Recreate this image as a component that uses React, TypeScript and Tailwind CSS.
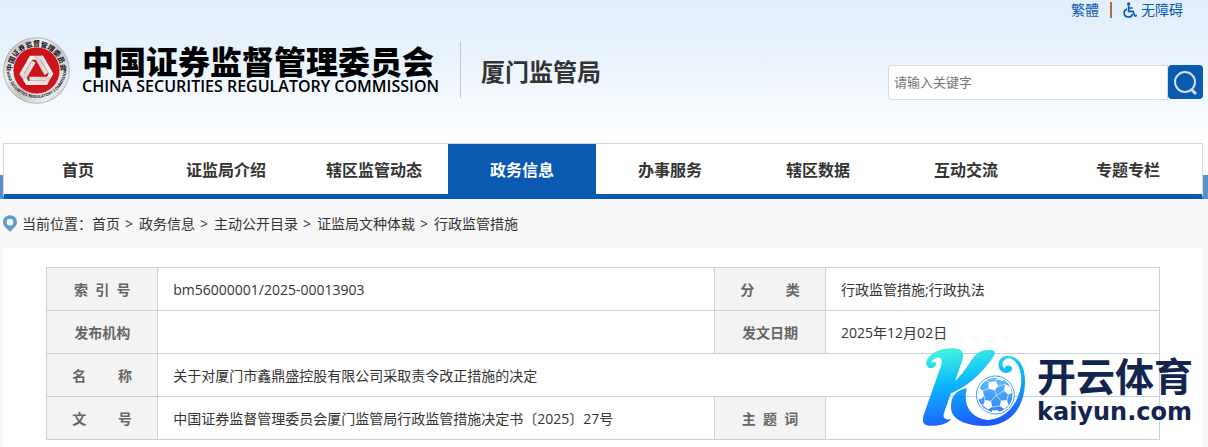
const navItems = ['首页', '证监局介绍', '辖区监管动态', '政务信息', '办事服务', '辖区数据', '互动交流', '专题专栏'];
const crumbs = ['首页', '政务信息', '主动公开目录', '证监局文种体裁', '行政监管措施'];

const th = 'border border-[#c6d1db] bg-[#f3f3f3] pt-[2px] text-center font-bold text-[#666] whitespace-pre';
const td = 'border border-[#c6d1db] px-[15px] pt-[2px] text-left';

function Seal() {
    return (
        <svg viewBox="0 0 200 200" className="w-[67px] h-[67px] shrink-0 overflow-visible" aria-hidden="true">
            <defs>
                <linearGradient id="silver" x1="0" y1="0" x2="1" y2="1">
                    <stop offset="0" stopColor="#999" />
                    <stop offset="0.3" stopColor="#f4f4f4" />
                    <stop offset="0.55" stopColor="#c4c4c4" />
                    <stop offset="0.8" stopColor="#eee" />
                    <stop offset="1" stopColor="#8e8e8e" />
                </linearGradient>
                <linearGradient id="band" x1="0" y1="0" x2="0.6" y2="1">
                    <stop offset="0" stopColor="#fff" />
                    <stop offset="1" stopColor="#c9c9c9" />
                </linearGradient>
                <path id="arcTop" d="M29 118 A73 73 0 1 1 171 118" />
                <path id="arcBottom" d="M10 92 A90 90 0 1 0 190 92" />
            </defs>
            <circle cx="100" cy="100" r="98" fill="url(#silver)" stroke="#999" strokeWidth="2" />
            <circle cx="100" cy="100" r="70" fill="#cd141d" stroke="#eee" strokeWidth="2" />
            <text fontSize="21" fontWeight="700" fill="#111" fontFamily="Noto Sans CJK SC, sans-serif" textAnchor="middle">
                <textPath href="#arcTop" startOffset="50%">中国证券监督管理委员会</textPath>
            </text>
            <text fontSize="12" fontWeight="700" fill="#222" fontFamily="Open Sans, sans-serif" textAnchor="middle">
                <textPath href="#arcBottom" startOffset="50%">CHINA SECURITIES REGULATORY COMMISSION</textPath>
            </text>
            <g fill="none" stroke="url(#band)" strokeWidth="12">
                <path d="M99 62 H84 L56 110 L64 122 L92 74" />
                <path d="M99 62 H84 L56 110 L64 122 L92 74" transform="rotate(120 100 103)" />
                <path d="M99 62 H84 L56 110 L64 122 L92 74" transform="rotate(240 100 103)" />
            </g>
        </svg>
    );
}

function KaiyunMark() {
    return (
        <svg viewBox="0 0 360 285" className="w-[120px] h-[95px] mr-[2px] shrink-0" aria-hidden="true">
            <defs>
                <linearGradient id="kBlue" gradientUnits="userSpaceOnUse" x1="150" y1="25" x2="190" y2="258">
                    <stop offset="0" stopColor="#41efe2" />
                    <stop offset="0.4" stopColor="#0bb9fb" />
                    <stop offset="1" stopColor="#2055ff" />
                </linearGradient>
                <linearGradient id="ballBlue" x1="0" y1="0" x2="0" y2="1">
                    <stop offset="0" stopColor="#5cc0f8" />
                    <stop offset="1" stopColor="#3380fb" />
                </linearGradient>
                <clipPath id="ballClip">
                    <circle cx="241" cy="165" r="52" />
                </clipPath>
            </defs>
            <g fill="url(#kBlue)">
                <path d="M52 84 C34 88 28 67 39 54 C58 32 86 24 116 25 C142 26 150 39 141 64 L86 222 C83 234 93 241 109 237 C91 257 64 258 42 257 C24 256 20 244 27 222 L78 77 C86 57 75 47 59 56 C47 63 46 68 57 66 C67 66 66 79 52 84 Z" />
                <path d="M92 166 L111 132 C132 113 151 91 165 67 C183 36 201 29 228 30 C243 32 243 40 232 55 C197 104 157 143 92 166 Z" />
                <path d="M156 144 C143 187 161 234 217 240 C284 239 326 166 318 104 C312 72 296 54 278 55 C260 59 257 82 271 86 C266 75 283 73 291 82 C294 95 277 103 264 97 C243 87 246 52 273 48 C310 44 331 77 330 127 C328 205 286 258 205 258 C143 255 105 235 108 196 C110 167 123 151 156 144 Z" />
            </g>
            <circle cx="241" cy="165" r="57" fill="#fff" stroke="#4c9dfb" strokeWidth="3" />
            <g clipPath="url(#ballClip)">
                <circle cx="241" cy="165" r="52" fill="url(#ballBlue)" />
                <g fill="#fff">
                    <path d="M221 126 L243 124 L250 138 L239 151 L220 146 Z" />
                    <path d="M270 133 L286 140 L291 158 L280 164 L267 152 Z" />
                    <path d="M258 182 L276 180 L281 196 L267 207 L254 198 Z" />
                    <path d="M210 180 L228 183 L232 201 L219 209 L204 196 Z" />
                    <path d="M192 143 L204 152 L207 168 L198 178 L187 174 Z" />
                    <path d="M247 110 L268 118 L262 123 L246 117 Z" />
                    <path d="M232 211 L249 211 L256 218 L230 219 Z" />
                </g>
                <path
                    fill="none"
                    stroke="#fff"
                    strokeWidth="2"
                    d="M221 126 L208 118 M243 124 L248 112 M250 138 L270 133 M239 151 L244 166 L267 152 M244 166 L258 182 M244 166 L228 183 M220 146 L204 152 M207 168 L210 180 M280 164 L276 180 M254 198 L232 201 M267 207 L268 216 M281 196 L290 190 M219 209 L218 216 M204 196 L194 190"
                />
            </g>
        </svg>
    );
}

export default function App() {
    return (
        <div className="min-h-screen flex flex-col bg-[#f7f7f7] text-sm text-[#333] font-['Open_Sans','Noto_Sans_CJK_SC',sans-serif]">
            <header className="pr-[2px] bg-[linear-gradient(to_bottom,#e1eefc_0,#e7f2fd_50px,#fff_140px,#fff_175px,#5b8fca_175px)]">
                <div className="w-full max-w-[1200px] mx-auto">
                    <div className="flex justify-end items-center h-5 pr-5 text-[#0a5ab2]">
                        <a href="#traditional">繁體</a>
                        <span className="w-[2px] h-4 mx-[11px] bg-[#b0703a]" />
                        <a href="#accessible" className="flex items-center gap-1">
                            <svg viewBox="0 0 42 48" className="w-[14px] h-4" fill="none" stroke="#0a5ab2" strokeWidth="5">
                                <circle cx="17" cy="6" r="5" fill="#0a5ab2" stroke="none" />
                                <path d="M17 11 V28 H30 L36 42 L42 40 M18 18 H29" />
                                <path d="M12 21 C0 25 0 44 16 45 C23 45 28 41 29 36" />
                            </svg>
                            无障碍
                        </a>
                    </div>

                    {/* Logo and search */}
                    <div className="flex items-center h-[123px] pb-[23px]">
                        <Seal />
                        <div className="ml-3 w-[358px] whitespace-nowrap text-black">
                            <div className="text-[32px] leading-8 font-black">中国证券监督管理委员会</div>
                            <div className="text-base leading-4 font-semibold">CHINA SECURITIES REGULATORY COMMISSION</div>
                        </div>
                        <div className="h-14 ml-5 border-l border-[#c8c8c8]" />
                        <h1 className="ml-5 mt-1 text-2xl font-bold whitespace-nowrap">厦门监管局</h1>
                        <form className="flex ml-auto mt-6 w-[315px] h-[35px]">
                            <input
                                type="text"
                                aria-label="请输入关键字"
                                placeholder="请输入关键字"
                                className="flex-1 min-w-0 px-[5px] bg-white border border-[#d9d9d9] rounded-l text-[13px] placeholder:text-[#757575]"
                            />
                            <button type="button" aria-label="搜索" className="flex items-center justify-center w-[35px] h-[34px] rounded bg-[#0a5ab2]">
                                <svg viewBox="0 0 26 26" className="w-[26px] h-[26px]" fill="none" stroke="#d3e2f2">
                                    <circle cx="12" cy="13" r="10" strokeWidth="2" />
                                    <path d="M19 21 L23 25" strokeWidth="3" />
                                </svg>
                            </button>
                        </form>
                    </div>

                    <nav className="flex h-14 bg-white border border-b-[5px] border-[#d8dbde] border-b-[#0a5ab2]">
                        {navItems.map((item) => (
                            <a
                                key={item}
                                href="#nav"
                                className={
                                    item === '政务信息'
                                        ? 'flex items-center justify-center w-[148px] pt-[2px] text-base font-bold bg-[#0a5ab2] text-white'
                                        : 'flex items-center justify-center w-[148px] pt-[2px] text-base font-bold last:ml-auto'
                                }
                            >
                                {item}
                            </a>
                        ))}
                    </nav>
                </div>
            </header>

            <main className="flex flex-col flex-1 pr-[2px]">
                <div className="flex flex-col flex-1 w-full max-w-[1200px] mx-auto">
                    <div className="flex items-center h-[49px]">
                        <svg viewBox="0 0 42 50" className="w-[14px] h-[17px] mr-[5px]" aria-hidden="true">
                            <path fill="#629ac8" fillRule="evenodd" d="M21 0 C9 0 0 9 0 21 C0 34 12 39 21 50 C30 39 42 34 42 21 C42 9 33 0 21 0 Z M21 11 A10 10 0 1 1 21 31 A10 10 0 1 1 21 11 Z" />
                        </svg>
                        <span>当前位置：</span>
                        {crumbs.map((crumb, i) => (
                            <span key={crumb}>
                                {i > 0 && <span className="ml-[5px] mr-[6px]">&gt;</span>}
                                <a href="#crumb">{crumb}</a>
                            </span>
                        ))}
                    </div>

                    <div className="relative flex-1 bg-white px-[43px] pt-[19px] pb-[7px]">
                        <table className="w-full table-fixed border-collapse">
                            <colgroup>
                                <col className="w-[10%]" />
                                <col className="w-[50%]" />
                                <col className="w-[10%]" />
                                <col className="w-[30%]" />
                            </colgroup>
                            <tbody>
                                <tr className="h-[43px]">
                                    <th className={th}>{'索  引  号'}</th>
                                    <td className={td}>bm56000001/2025-00013903</td>
                                    <th className={th}>{'分\u3000\u3000 类'}</th>
                                    <td className={td}>行政监管措施;行政执法</td>
                                </tr>
                                <tr className="h-[43px]">
                                    <th className={th}>发布机构</th>
                                    <td className={td}></td>
                                    <th className={th}>发文日期</th>
                                    <td className={td}>2025年12月02日</td>
                                </tr>
                                <tr className="h-[43px]">
                                    <th className={th}>{'名\u3000\u3000 称'}</th>
                                    <td className={td} colSpan={3}>关于对厦门市鑫鼎盛控股有限公司采取责令改正措施的决定</td>
                                </tr>
                                <tr className="h-[43px]">
                                    <th className={th}>{'文\u3000\u3000 号'}</th>
                                    <td className={td}>中国证券监督管理委员会厦门监管局行政监管措施决定书〔2025〕27号</td>
                                    <th className={th}>{'主  题  词'}</th>
                                    <td className={td}></td>
                                </tr>
                            </tbody>
                        </table>

                        {/* Sponsor badge over the table corner */}
                        <div className="absolute right-[10px] bottom-3 flex items-center text-[#13244f] whitespace-nowrap">
                            <KaiyunMark />
                            <div className="pt-2">
                                <div className="text-[39px] leading-10 font-bold">开云体育</div>
                                <div className="text-2xl leading-8 font-bold font-['DejaVu_Sans',sans-serif]">kaiyun.com</div>
                            </div>
                        </div>
                    </div>
                </div>
            </main>
        </div>
    );
}
